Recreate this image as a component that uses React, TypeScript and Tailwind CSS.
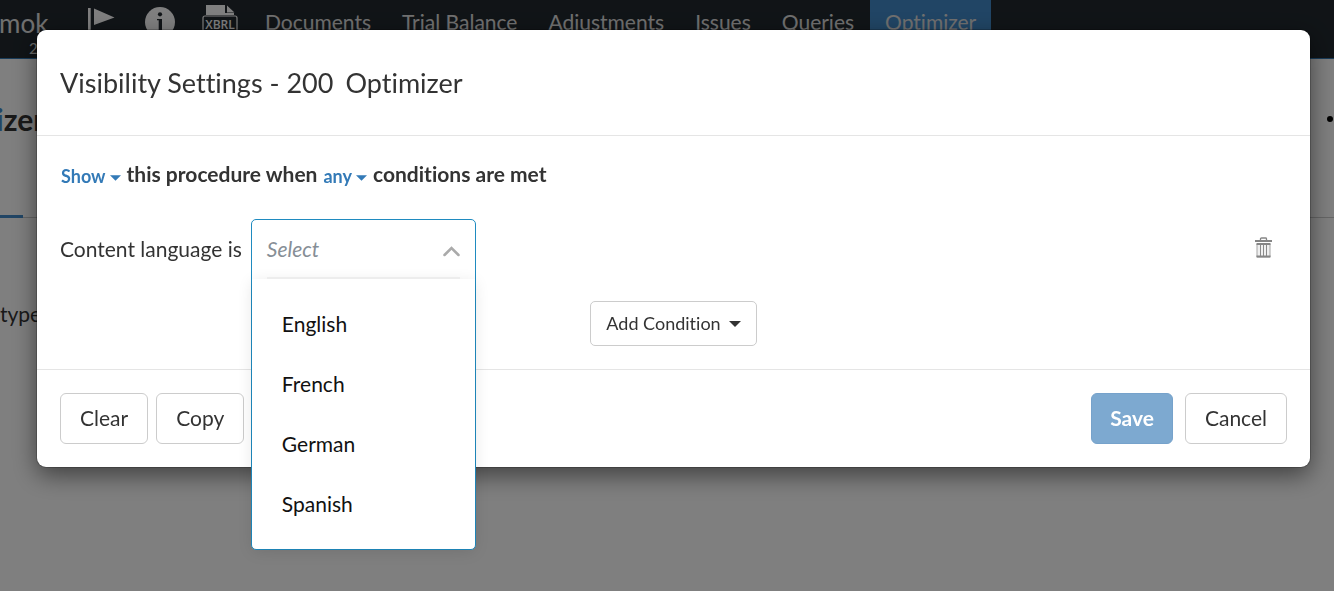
import React from "react";

const navItems = ["Documents", "Trial Balance", "Adjustments", "Issues", "Queries", "Optimizer"];
const languages = ["English", "French", "German", "Spanish"];

function Caret({ className }: { className: string }) {
  return (
    <svg viewBox="0 0 12 6" className={className} aria-hidden="true">
      <path d="M0 0h12L6 6z" fill="currentColor" />
    </svg>
  );
}

function FlagIcon() {
  return (
    <svg width="28" height="32" viewBox="0 0 28 32" fill="currentColor" aria-hidden="true">
      <path d="M1 1h2.700v31H1zM7 1.500l20.500 9L7 18z" />
    </svg>
  );
}

function InfoIcon() {
  return (
    <svg width="30" height="30" viewBox="0 0 30 30" aria-hidden="true">
      <circle cx="15" cy="15" r="15" fill="currentColor" />
      <circle cx="15" cy="7.300" r="2.100" fill="#22292f" />
      <path d="M12 12h5v11h2v1.200h-7V23h1.700v-9.800H12z" fill="#22292f" />
    </svg>
  );
}

function XbrlIcon() {
  return (
    <svg width="36" height="36" viewBox="0 0 36 36" aria-hidden="true">
      <path d="M4 0h19v8h9v2H4zM25 .5l7.500 7H25z" fill="currentColor" />
      <rect x="1" y="11" width="34" height="17" rx="2" fill="#22292f" stroke="currentColor" strokeWidth="1.200" />
      <path d="M4 29h27v6H4z" fill="currentColor" />
      <text x="18" y="24" textAnchor="middle" fontSize="12" fontWeight="600" fontFamily="Open Sans, sans-serif" fill="currentColor">
        XBRL
      </text>
    </svg>
  );
}

function TrashIcon() {
  return (
    <svg width="17" height="21" viewBox="0 0 17 21" aria-hidden="true">
      <path d="M5.500 3V1.700Q5.500 1 6.500 1h4q1 0 1 .7V3" fill="none" stroke="#858585" strokeWidth="1.300" />
      <path d="M0 3h17v2H0z" fill="#858585" />
      <path d="M2 7h13v13H2z" fill="#f0f0f0" stroke="#a5a5a5" strokeWidth="1" />
      <path d="M1.500 6h14v2h-14zM1.500 18.500h14v2h-14z" fill="#858585" />
      <path d="M5.500 8v11M8.500 8v11M11.500 8v11" stroke="#8a8a8a" strokeWidth="1" />
    </svg>
  );
}

function Page() {
  return (
    <div className="min-h-screen overflow-hidden bg-white">
      <header className="flex h-[59px] items-start overflow-hidden border-b border-[#337ab7] bg-[#22292f] text-white">
        <div className="-ml-px flex w-[88px] shrink-0 flex-col">
          <span className="pt-2 text-[26px] leading-[30px] text-[#e0e0e0]">mok</span>
          <span className="pl-[30px] text-[15px] leading-5 text-[#d8d8d8]">2</span>
        </div>
        <div className="flex shrink-0 items-start">
          <button aria-label="Flag" className="w-[58px] pt-[7px]"><FlagIcon /></button>
          <button aria-label="Information" className="w-[57px] pt-[7px]"><InfoIcon /></button>
          <button aria-label="XBRL" className="w-12 pt-[5px]"><XbrlIcon /></button>
        </div>
        <nav className="flex h-full gap-px">
          {navItems.map((item) => (
            <a
              key={item}
              href="#"
              className={
                item === "Optimizer"
                  ? "whitespace-nowrap bg-[#428bca] px-[15px] pt-[7px] text-[21px] leading-[30px] text-[#e0e0e0]"
                  : "whitespace-nowrap px-[15px] pt-[7px] text-[21px] leading-[30px] text-[#e0e0e0]"
              }
            >
              {item}
            </a>
          ))}
        </nav>
      </header>
      <div className="flex h-[156px] justify-between pt-[39px]">
        <h1 className="-ml-1 text-[30px] leading-[42px] font-bold text-[#333]">
          <span className="text-[#428bca]">i</span>zer
        </h1>
        <span className="mt-[18px] mr-px size-[6px] rounded-full bg-black" />
      </div>
      <div className="flex">
        <div className="h-[3px] w-[23px] bg-[#428bca]" />
        <div className="mt-0.5 h-px flex-1 bg-[#ccc]" />
      </div>
      <p className="pt-[81px] text-[21px] leading-[30px] text-[#333]">type</p>
    </div>
  );
}

const buttonClass =
  "h-[51px] rounded-[6px] border border-[#ccc] bg-white px-[19px] pb-0.5 text-[21px] leading-[30px] text-[#333]";

export default function App() {
  return (
    <div className="font-['Lato',sans-serif] [font-variant-ligatures:no-common-ligatures]">
      <Page />
      <div className="fixed inset-0 bg-black/50 pt-[30px] pr-6 pl-[37px]">
        <section
          role="dialog"
          aria-modal="true"
          aria-labelledby="dialog-title"
          className="rounded-[9px] bg-white text-[#333] shadow-[0_8px_24px_rgba(0,0,0,0.5),0_0_0_1px_rgba(0,0,0,0.2)]"
        >
          <header className="flex h-[106px] items-center border-b border-[#e5e5e5] px-[23px]">
            <h2 id="dialog-title" className="flex gap-3 text-[27px] leading-9">
              <span>Visibility Settings - 200</span>
              <span>Optimizer</span>
            </h2>
          </header>

          <div className="px-[23px] pt-[23px] pb-[23px]">
            <div className="flex h-[30px] items-center text-[21px] font-bold">
              <button className="mt-1 flex items-center gap-1 pl-px text-[18px] text-[#337ab7]">
                Show
                <Caret className="mt-1 h-1.5 w-[11px]" />
              </button>
              <span className="ml-1.5">this procedure when</span>
              <button className="mt-1 ml-1.5 flex items-center gap-1 text-[18px] text-[#337ab7]">
                any
                <Caret className="mt-1 h-1.5 w-[11px]" />
              </button>
              <span className="ml-1.5">conditions are met</span>
            </div>

            <div className="mt-[30px] flex h-[59px] items-center">
              <label id="language-label" htmlFor="language" className="text-[21px]">
                Content language is
              </label>
              <div className="relative ml-[9px] h-full w-[225px]">
                <div className="absolute inset-x-0 top-0 z-10 rounded-[5px] border border-[#1f8bc0] bg-white">
                  <button
                    id="language"
                    aria-haspopup="listbox"
                    aria-expanded="true"
                    className="flex h-[59px] w-full items-center px-[15px] text-[21px] text-[#868e96] italic"
                  >
                    <span className="flex h-full flex-1 items-center justify-between border-b-2 border-[#ededed] pt-px">
                      Select
                      <svg width="17" height="12" viewBox="0 0 17 12" className="mt-1" aria-hidden="true">
                        <path d="M1.500 10L8.500 3l7 7" fill="none" stroke="#aaa" strokeWidth="2.500" strokeLinecap="round" />
                      </svg>
                    </span>
                  </button>
                  <ul
                    role="listbox"
                    aria-labelledby="language-label"
                    className="rounded-b-[5px] py-[15px] text-[21px] text-[#111] shadow-[0_3px_15px_rgba(0,0,0,0.1)]"
                  >
                    {languages.map((language) => (
                      <li key={language} role="option" aria-selected="false" className="flex h-[60px] items-center px-[30px]">
                        {language}
                      </li>
                    ))}
                  </ul>
                </div>
              </div>
              <button aria-label="Delete condition" className="mr-[15px] mb-0.5 ml-auto">
                <TrashIcon />
              </button>
            </div>

            <div className="mt-[23px] flex justify-center">
              <button className="flex h-[45px] items-center gap-2 rounded-[5px] border border-[#ccc] px-[15px] text-[18px]">
                Add Condition
                <Caret className="h-1.5 w-3" />
              </button>
            </div>
          </div>

          <footer className="flex items-center border-t border-[#e5e5e5] px-[23px] py-[23px]">
            <div className="flex gap-2">
              <button className={buttonClass}>Clear</button>
              <button className={buttonClass}>Copy</button>
            </div>
            <div className="ml-auto flex gap-3">
              <button className="h-[51px] rounded-[6px] border border-[#76a2cb] bg-[#7da9d0] px-[18px] pb-0.5 text-[21px] leading-[30px] font-bold text-white">
                Save
              </button>
              <button className={buttonClass}>Cancel</button>
            </div>
          </footer>
        </section>
      </div>
    </div>
  );
}
